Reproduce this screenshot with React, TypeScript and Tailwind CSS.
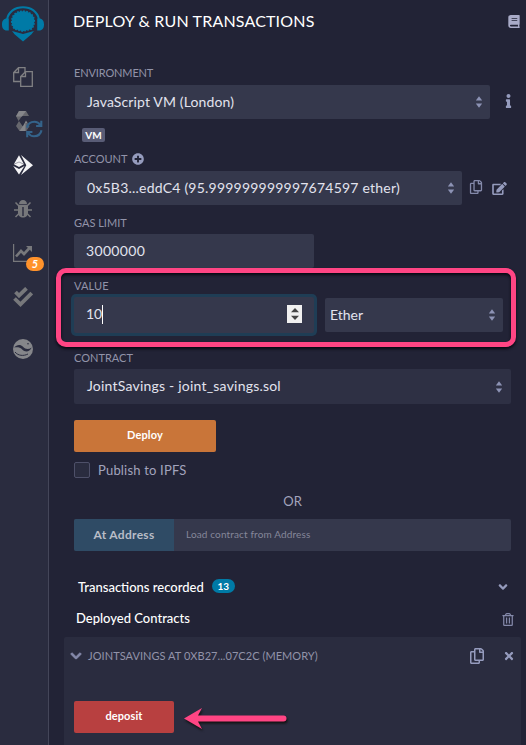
import type { ReactNode } from "react";
import { FaAngleDown, FaBook, FaChevronDown, FaEdit, FaInfo, FaPlusCircle, FaRegCopy, FaRegTrashAlt, FaTimes } from "react-icons/fa";

function Logo() {
  return (
    <svg width="42" height="36" viewBox="0 0 42 36" fill="#007aa6">
      <path d="M5 13.500C6.500 5.500 13 1.300 21 1.300S35.500 5.500 37 13.500" fill="none" stroke="#007aa6" strokeWidth="2" />
      <path d="M6.800 12.500v12H5C1.500 24.500 0 22 0 18.500s1.500-6 5-6zM35.200 12.500v12H37c3.500 0 5-2.500 5-6s-1.500-6-5-6z" />
      <path d="M21 5.200c6.500 0 11.300 4 11.300 9.800 0 3.200-1 6-2.800 8L21 25.200 12.500 23c-1.800-2-2.800-4.800-2.800-8 0-5.800 4.800-9.800 11.300-9.800z" />
      <path d="M21 5.200c6.500 0 11.300 4 11.300 9.800 0 3.200-1 6-2.800 8L21 25.200 12.500 23c-1.800-2-2.800-4.800-2.800-8 0-5.800 4.800-9.800 11.300-9.800z" fill="none" stroke="#007aa6" strokeWidth="1.500" strokeDasharray="1.800 1.300" />
      <path d="M10 25 21 28 32 25 29.500 28.300 21 35.500 12.500 28.300z" />
    </svg>
  );
}

function FilesIcon() {
  return (
    <svg width="20" height="20" viewBox="0 0 20 20" fill="none" stroke="#808083" strokeWidth="1.300">
      <path d="M12 5.500V.7H5.500L.7 5.500v9h7M5.500.7v4.800H.7" />
      <path d="M12.500 4.700h6.800v14.600H7.700v-9.800zM12.500 4.700v4.800H7.700" />
    </svg>
  );
}

function SolidityIcon() {
  return (
    <svg width="28" height="28" viewBox="0 0 28 28">
      <path d="M4 1h7l3 5H7l-3.500 5L1 6z" fill="#66676d" />
      <path d="M4 1h7L7 6.500H1z" fill="#85868a" />
      <path d="M4 11 1 16l3.500 5h7l3-5H7.500z" fill="#66676d" />
      <path d="M11 10.500l3.500 5.500-3.500 5H4.500L8 16z" fill="#85868a" />
      <path d="M10.500 13h17v15h-17z" fill="#2a2c3f" fillOpacity=".4" />
      <g fill="none" stroke="#34638a" strokeWidth="2.100">
        <path d="M12 17.800c.8-4 4-6 7.500-6 2.500 0 4.500 1.200 6 3.500M26.300 10.800v5.200h-5.200M26.500 20.200c-.8 4-4 6-7.500 6-2.500 0-4.500-1.200-6-3.500M12.200 27.200V22h5.200" />
      </g>
    </svg>
  );
}

function DeployIcon() {
  return (
    <svg width="20" height="20" viewBox="0 0 20 20" fill="#f4f4f6">
      <path d="M6 .3 6 12 .8 9.300zM6 .3v11.700l5-2.700z" />
      <path d="M.2 11 6 14l5.500-3L6 19.500z" />
      <path d="M8 0 20 10.200 8 20l5.300-9.800z" />
      <path d="M.8 9.300 6 7l5 2.300" fill="none" stroke="#2a2c3f" strokeWidth=".6" strokeOpacity=".7" />
    </svg>
  );
}

function BugIcon() {
  return (
    <svg width="18" height="18" viewBox="0 0 18 18" fill="#77787b">
      <path d="M5 4.200C5 1.800 6.600 0 9 0s4 1.800 4 4.200z" />
      <path d="M4 5h10v8c0 2.500-2.200 4.500-5 4.500S4 15.500 4 13z" />
      <path d="M9 7v9" stroke="#2a2c3f" strokeWidth="1.400" />
      <path d="M1.500 2.500 5 6M16.500 2.500 13 6M0 10h4.500M18 10h-4.500M1.500 17 5 13.500M16.500 17 13 13.500" stroke="#77787b" strokeWidth="1.500" />
    </svg>
  );
}

function ChartIcon() {
  return (
    <svg width="20" height="18" viewBox="0 0 20 18" fill="none" stroke="#77787b">
      <path d="M.6 0v17.300H20" strokeWidth="1.200" />
      <path d="M3 12.500 8 7l3 3 6-6.500" strokeWidth="2.600" />
      <path d="M13 2h6v6z" fill="#77787b" stroke="none" />
    </svg>
  );
}

function ChecksIcon() {
  return (
    <svg width="20" height="20" viewBox="0 0 20 20" fill="none" stroke="#77787b" strokeWidth="3.800">
      <path d="M2.500 5 6 8.500 13.500 1.300" />
      <path d="M1.500 11.500 7.500 17.300 18.700 6" />
    </svg>
  );
}

function WaveIcon() {
  return (
    <svg width="20" height="20" viewBox="0 0 20 20">
      <circle cx="10" cy="10" r="10" fill="#85868a" />
      <path d="M1.200 8.500C3.500 5.500 7.500 5 10 7.800c2.500 2.700 5.500 3 8.700.7-2 4.500-6.500 5-9.200 2.300C7 8 4 8 1.200 8.500z" fill="#2a2c3f" />
      <path d="M2 13c3 3.800 8.500 4.300 13 2" fill="none" stroke="#2a2c3f" strokeWidth="1" />
      <circle cx="15" cy="4.800" r=".8" fill="#2a2c3f" />
    </svg>
  );
}

function Sorter() {
  return (
    <svg width="6" height="12" viewBox="0 0 6 12" fill="#8d93b5" className="shrink-0">
      <path d="M3 .3 6.200 4.500H-.2zM3 11.700-.2 7.500h6.400z" />
    </svg>
  );
}

function Label({ children, className = "" }: { children: ReactNode; className?: string }) {
  return <div className={`flex h-4 items-center text-[11px] leading-4 text-[#9293a9] ${className}`}>{children}</div>;
}

function Select({ children, className = "" }: { children: ReactNode; className?: string }) {
  return (
    <div className={`flex h-[34px] items-center justify-between rounded-[2px] bg-[#35384c] pr-2 text-sm text-[#e2e3ee] ${className}`}>
      <span className="mt-[-1px]">{children}</span>
      <Sorter />
    </div>
  );
}

export default function App() {
  return (
    <div className="relative flex h-[745px] w-[526px] overflow-hidden bg-[#222336] font-['Lato',sans-serif] whitespace-nowrap">
      <aside className="flex w-[49px] shrink-0 flex-col border-r border-[#444659] bg-[#2a2c3f]">
        <div className="mt-[6px] ml-[2px] h-9"><Logo /></div>
        <div className="mt-[25px] ml-[13px] h-5"><FilesIcon /></div>
        <div className="mt-[23px] ml-[15px] h-7"><SolidityIcon /></div>
        <div className="mt-[17px] ml-[13px] h-5"><DeployIcon /></div>
        <div className="mt-[25px] ml-[14px] h-[18px]"><BugIcon /></div>
        <div className="relative mt-[26px] ml-[13px] h-[18px] w-5">
          <ChartIcon />
          <span className="absolute top-[13px] left-[13px] flex h-[14px] w-[18px] items-center justify-center rounded-full bg-[#ff922b] text-[11px] font-bold text-white italic">5</span>
        </div>
        <div className="mt-[25px] ml-[13px] h-5"><ChecksIcon /></div>
        <div className="mt-[32px] ml-[13px] h-5"><WaveIcon /></div>
      </aside>

      <main className="flex flex-1 flex-col">
        <header className="mt-[11px] flex h-5 items-center justify-between pr-[6px] pl-6">
          <h1 className="text-base leading-5 tracking-[0.17px] text-white">DEPLOY &amp; RUN TRANSACTIONS</h1>
          <FaBook className="h-[13px] w-[12px] text-[#a9abc8]" />
        </header>

        <Label className="mt-[34px] ml-[25px] tracking-[-0.14px]">ENVIRONMENT</Label>
        <div className="mt-1 flex items-center">
          <Select className="ml-[26px] w-[415px] pl-3 tracking-[0.13px]">JavaScript VM (London)</Select>
          <FaInfo className="mt-[-3px] ml-[12px] h-[14px] w-[13px] text-[#959bbd]" />
        </div>
        <div className="mt-[9px] ml-[33px] flex h-[14px] w-[23px] items-center justify-center rounded-[2px] bg-[#595c76] text-[10px] font-bold text-white">VM</div>

        <Label className="mt-[9px] ml-[25px]">
          ACCOUNT <FaPlusCircle className="mt-[-1px] ml-[5px] h-3 w-3 text-[#959bbd]" />
        </Label>
        <div className="mt-1 flex items-center">
          <Select className="ml-[26px] w-[387px] pl-3 tracking-[0.22px]">0x5B3...eddC4 (95.999999999997674597 ether)</Select>
          <FaRegCopy className="mt-[-3px] ml-[7px] h-[14px] w-[14px] text-[#8489aa]" />
          <FaEdit className="ml-[9px] h-[13px] w-[15px] text-[#959bbd]" />
        </div>

        <Label className="mt-[10px] ml-[25px]">GAS LIMIT</Label>
        <div className="mt-[3px] ml-[25px] flex h-[34px] w-[240px] items-center rounded-[2px] bg-[#35384c] pl-3 text-sm tracking-[0.33px] text-[#e2e3ee]">3000000</div>

        <Label className="mt-[10px] ml-[25px] tracking-[0.15px]">VALUE</Label>
        <div className="mt-[3px] flex h-9 items-center">
          <div className="ml-[25px] flex h-9 w-[240px] items-center rounded-[2px] bg-[#35384c] pb-[2px] pl-3 text-sm text-[#e2e3ee] ring-3 ring-[#1f3d55]">
            <span>10</span>
            <span className="h-[19px] w-px bg-white" />
            <span className="mr-[12px] ml-auto flex h-[18px] w-[15px] items-center justify-center bg-[#f0f0f0]">
              <svg width="8" height="12" viewBox="0 0 8 12" fill="#444"><path d="M4 0 8 4.300H0zM4 12 0 7.700h8z" /></svg>
            </span>
          </div>
          <Select className="ml-[11px] w-[178px] pl-[5px]">Ether</Select>
        </div>

        <Label className="mt-[17px] ml-[25px]">CONTRACT</Label>
        <div className="mt-[3px] ml-[25px] flex h-[35px] w-[437px] items-center justify-between rounded-[2px] bg-[#2e3044] pr-[9px] pl-[13px] text-sm tracking-[0.21px] text-[#e2e3ee]">
          <span className="mt-[-1px]">JointSavings - joint_savings.sol</span>
          <Sorter />
        </div>

        <button className="mt-4 ml-[25px] flex h-8 w-[142px] items-center justify-center rounded-[2px] bg-[#c97539] pb-px text-[11px] font-bold tracking-[0.15px] text-white">Deploy</button>
        <div className="mt-[10px] ml-[25px] flex h-4 items-center text-[13px] tracking-[0.19px] text-[#a2a3bd]">
          <span className="mr-2 h-4 w-4 rounded-[2px] border border-[#4e5069] bg-[#2a2c3f]" />
          <span className="mt-[2px]">Publish to IPFS</span>
        </div>
        <div className="mt-[15px] ml-[25px] h-4 w-[437px] text-center text-[13px] leading-4 text-[#a2a3bd]">OR</div>
        <div className="mt-[10px] ml-[25px] flex h-8 w-[437px] overflow-hidden rounded-[2px] bg-[#35384c]">
          <button className="flex w-[100px] items-center justify-center bg-[#2f4b65] text-xs font-bold tracking-[0.3px] text-[#b9bdc7]">At Address</button>
          <span className="pl-3 text-[10px] leading-[31px] tracking-[0.14px] text-[#85879a]">Load contract from Address</span>
        </div>

        <div className="mt-7 flex h-4 items-center pl-[29px] text-[13px] font-medium text-white">
          <span className="mt-[2px]">Transactions recorded</span>
          <span className="mt-[-2px] ml-[8px] flex h-[14px] w-[23px] items-center justify-center rounded-full bg-[#007aa6] text-[10px] font-bold">13</span>
          <FaAngleDown className="mr-[16px] ml-auto h-[14px] w-[14px] text-[#959bbd]" />
        </div>
        <div className="mt-4 flex h-4 items-center justify-between pr-[12px] pl-[27px] text-[13px] font-medium text-white">
          <span>Deployed Contracts</span>
          <FaRegTrashAlt className="mt-px h-[13px] w-3 text-[#8489aa]" />
        </div>

        <section className="mt-[10px] mr-[5px] ml-[15px] flex-1 rounded-t-[2px] bg-[#2a2c3f]">
          <div className="mt-[11px] flex h-4 items-center text-[11px] tracking-[0.05px] text-[#9293a9]">
            <FaChevronDown className="mr-[6px] ml-[6px] h-3 w-3 stroke-[#8489aa] stroke-[40] text-[#8489aa]" />
            JOINTSAVINGS AT 0XB27...07C2C (MEMORY)
            <FaRegCopy className="ml-auto h-4 w-4 text-[#959bbd]" />
            <FaTimes className="mr-[6px] ml-[18px] h-3 w-3 text-[#959bbd]" />
          </div>
          <button className="mt-[37px] ml-[10px] flex h-8 w-[100px] items-center justify-center rounded-[2px] bg-[#b84040] pb-px text-[11px] font-bold tracking-[0.1px] text-white">deposit</button>
        </section>
      </main>

      <div className="pointer-events-none absolute top-[268px] left-[56px] h-[79px] w-[460px] rounded-[10px] border-5 border-[#ff4584] shadow-[0_2px_3px_#080812,inset_0_2px_3px_#080812]" />
      <svg className="absolute top-[704px] left-[180px] drop-shadow-[1px_2px_1px_#111]" width="112" height="30" viewBox="0 0 112 30" fill="#ff4584">
        <path d="M4 14.500 22 4l-4 7.500h85.500a3 3 0 0 1 0 6H18l4 7.500z" />
      </svg>
    </div>
  );
}
